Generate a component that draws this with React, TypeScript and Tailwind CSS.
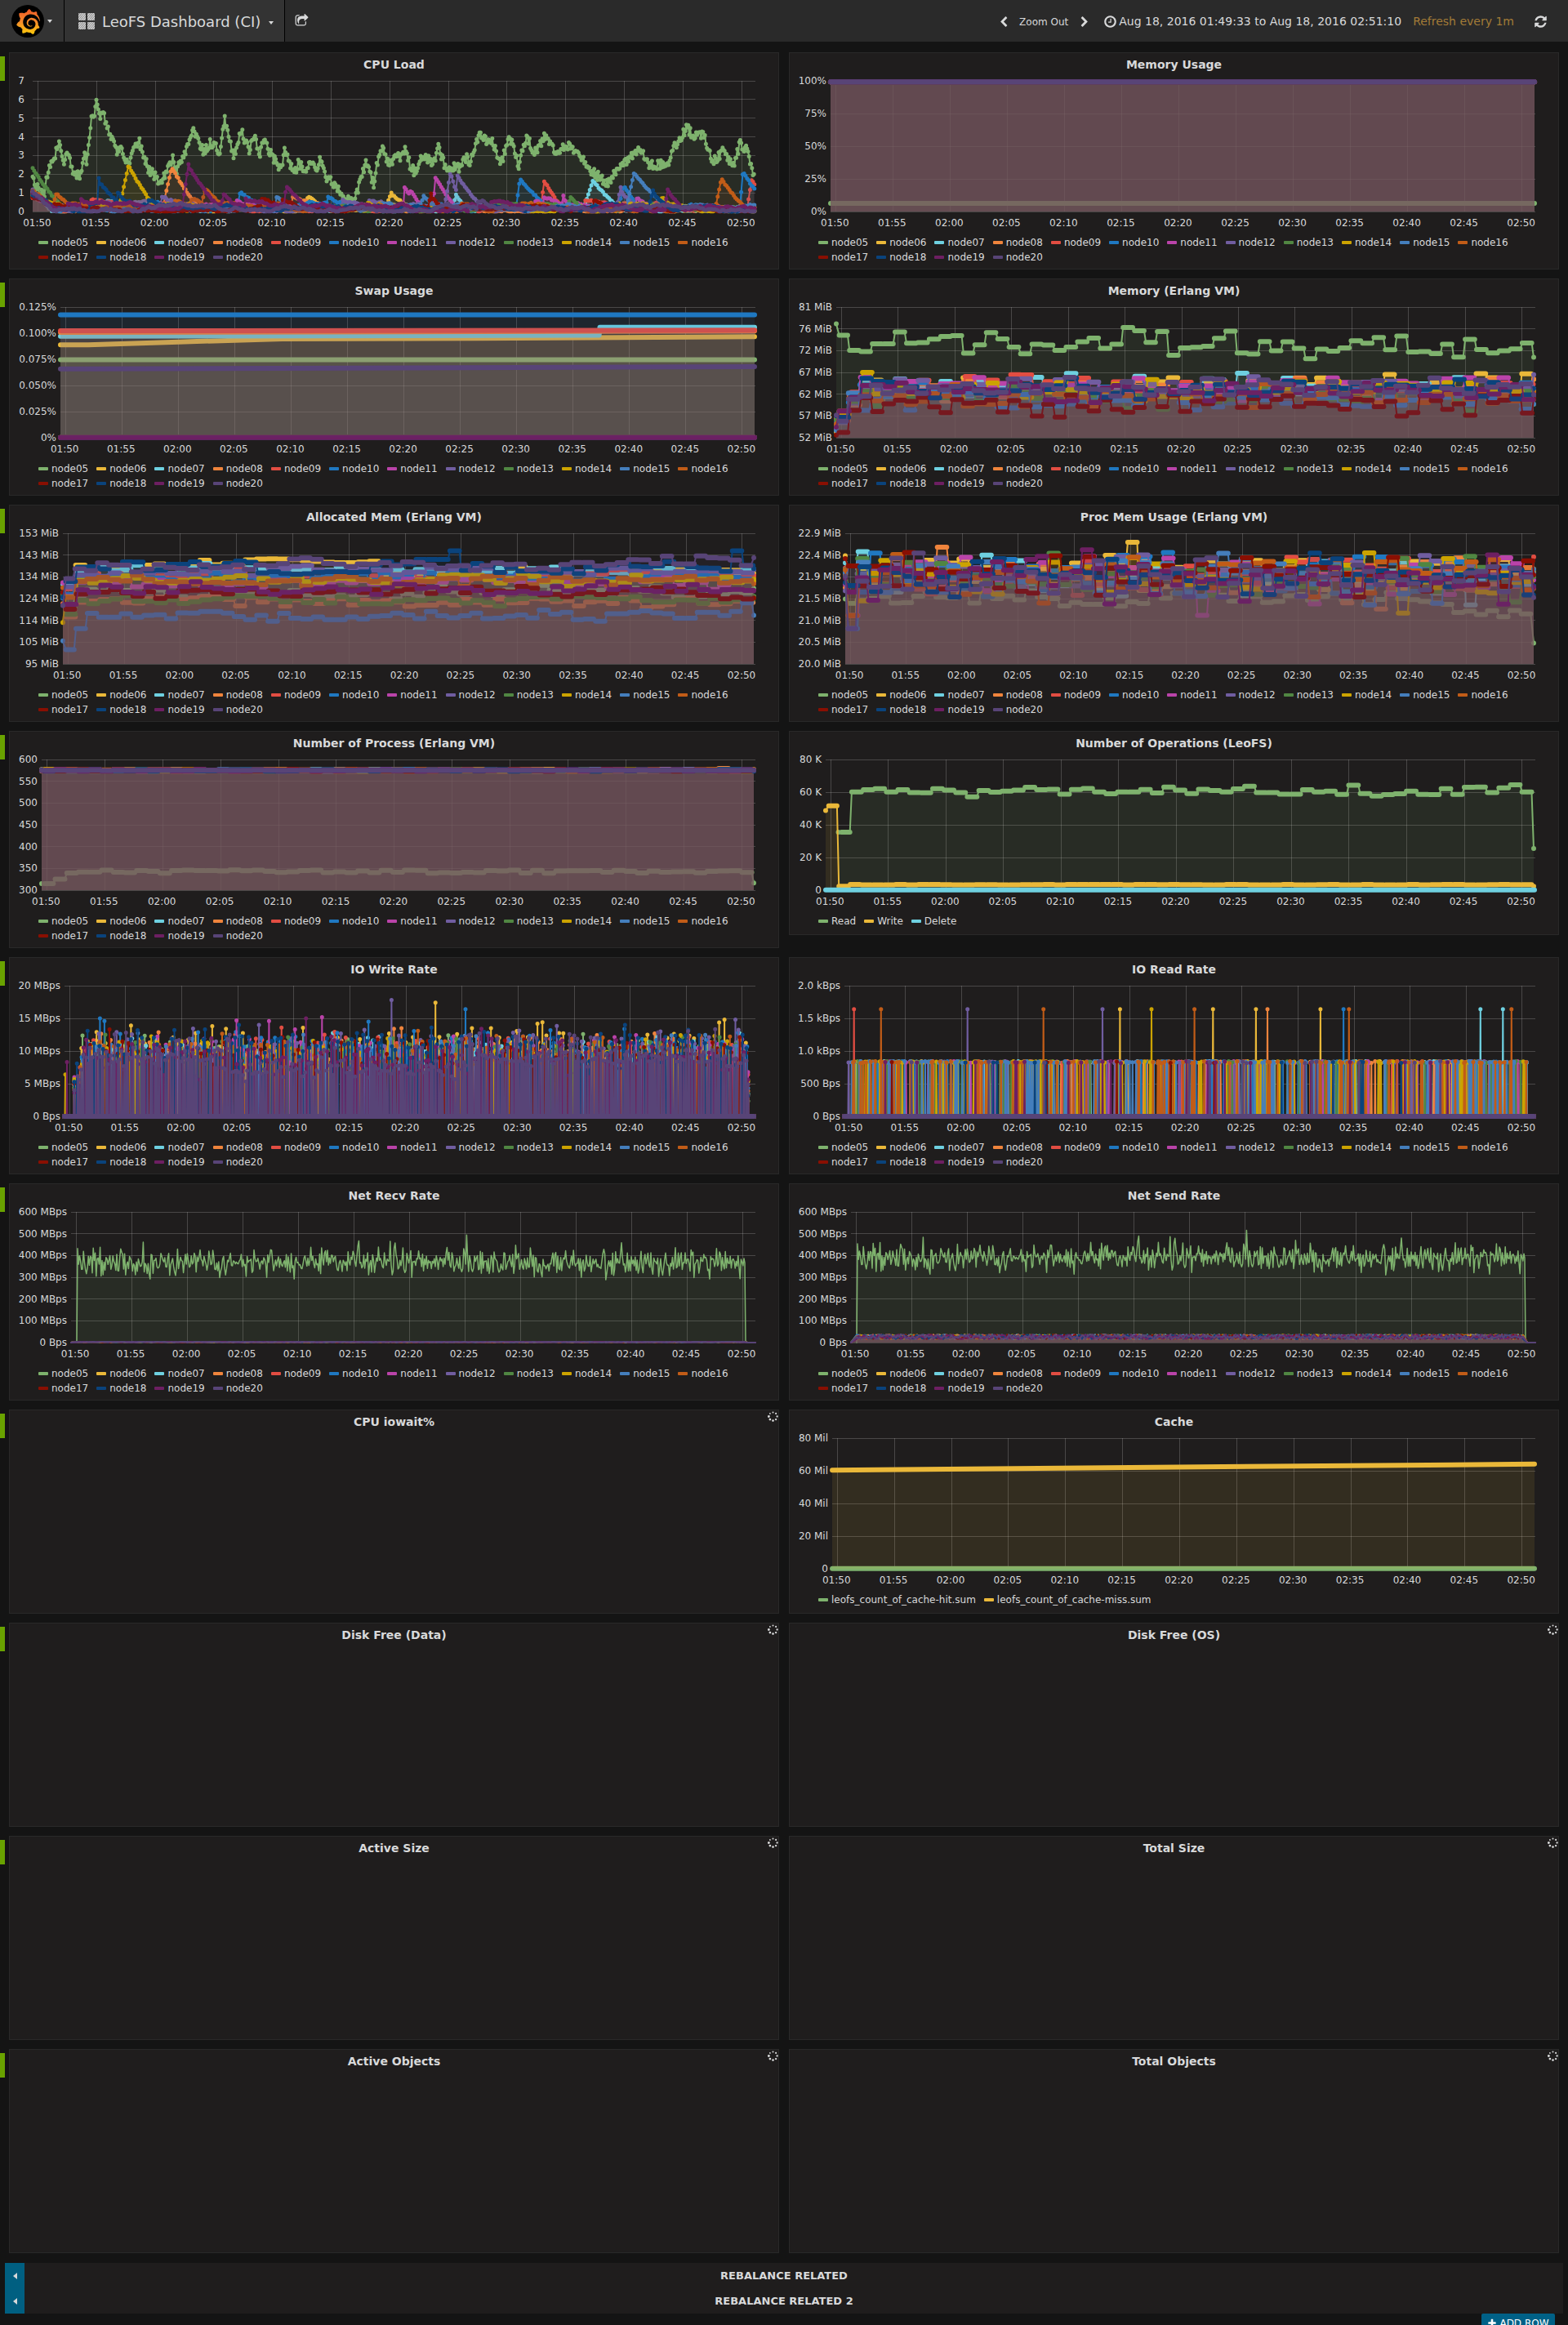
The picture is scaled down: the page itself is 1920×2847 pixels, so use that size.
import React from 'react';
import { SiGrafana } from 'react-icons/si';

const PALETTE = [
  '#7EB26D', '#EAB839', '#6ED0E0', '#EF843C', '#E24D42', '#1F78C1', '#BA43A9', '#705DA0',
  '#508642', '#CCA300', '#447EBC', '#C15C17', '#890F02', '#0A437C', '#6D1F62', '#584477',
];
const NODES = PALETTE.map((color, i) => ({ color, label: `node${String(i + 5).padStart(2, '0')}` }));

const TIMES = ['01:50', '01:55', '02:00', '02:05', '02:10', '02:15', '02:20', '02:25', '02:30', '02:35', '02:40', '02:45', '02:50'];
const SPAN = 61.617;
const FIRST_TICK = 0.45;
const RIGHT = 913;
const TOP = 6;
const HEIGHT = 160;
const BOTTOM = TOP + HEIGHT;

type Pt = [number, number];
type Layer = {
  color: string;
  fill?: Pt[];
  line?: Pt[];
  thin?: number;
  thick?: Pt[][];
  dots?: Pt[];
};

function rng(seed: number) {
  let s = seed * 2654435761 + 12345;
  return () => {
    s = (s + 0x6d2b79f5) | 0;
    let t = Math.imul(s ^ (s >>> 15), 1 | s);
    t = (t + Math.imul(t ^ (t >>> 7), 61 | t)) ^ t;
    return ((t ^ (t >>> 14)) >>> 0) / 4294967296;
  };
}

const f = (n: number) => Math.round(n * 10) / 10;
const yOf = (frac: number) => BOTTOM - frac * HEIGHT;
const poly = (pts: Pt[]) => pts.map(([x, y], i) => `${i ? 'L' : 'M'}${f(x)} ${f(y)}`).join('');
const area = (pts: Pt[]) => (pts.length ? `${poly(pts)}L${f(pts[pts.length - 1][0])} ${BOTTOM}L${f(pts[0][0])} ${BOTTOM}Z` : '');
const dotPath = (pts: Pt[]) => pts.map(([x, y]) => `M${f(x)} ${f(y)}h0.01`).join('');

function interp(keys: Pt[], x: number) {
  if (x <= keys[0][0]) return keys[0][1];
  for (let i = 1; i < keys.length; i++) {
    if (x <= keys[i][0]) {
      const [x0, y0] = keys[i - 1];
      const [x1, y1] = keys[i];
      return y0 + ((y1 - y0) * (x - x0)) / (x1 - x0);
    }
  }
  return keys[keys.length - 1][1];
}

/* A near-constant series whose points merge into one thick band. */
function band(color: string, left: number, keys: Pt[]): Layer {
  const pts: Pt[] = keys.map(([t, v]) => [left + t * (RIGHT - left - 1), yOf(v)]);
  return { color, fill: pts, thick: [pts] };
}

/* A series that holds each value for about a minute. */
function steps(color: string, left: number, vals: number[], phase = 0, startAt = 0): Layer {
  const n = vals.length - 2;
  const scale = (RIGHT - left) / SPAN;
  const unit = (61.3 - startAt) / n;
  const thick: Pt[][] = [];
  const line: Pt[] = [];
  const x0 = left + startAt * scale;
  line.push([x0, yOf(vals[0])]);
  thick.push([[x0, yOf(vals[0])], [x0 + 0.01, yOf(vals[0])]]);
  for (let i = 0; i < n; i++) {
    const a = left + (startAt + i * unit + (i ? phase : 0.1) + 0.16) * scale;
    const b = left + (startAt + (i + 1) * unit + phase) * scale;
    const y = yOf(vals[i + 1]);
    thick.push([[a, y], [b, y]]);
    line.push([a, y], [b, y]);
  }
  const end: Pt = [RIGHT - 2, yOf(vals[vals.length - 1])];
  line.push(end);
  thick.push([end, [end[0] + 0.01, end[1]]]);
  return { color, fill: line, line, thin: 2, thick };
}

/* ---------- CPU load ---------- */
const CPU_MAIN: Pt[] = [
  [40, 1.9], [49, 1], [54, 0.9], [56, 1.4], [59, 2.2], [67, 3], [73, 3.9], [78, 2.7], [83, 3.1], [89, 2.2], [98, 1.9], [103, 3.1], [106, 2.6],
  [112, 5.2], [114, 4.9], [118, 6], [122, 4.9], [125, 5.5], [131, 4.5], [138, 3.8], [145, 3.1], [149, 3.4], [157, 2.5], [163, 3.3],
  [171, 3.7], [176, 3], [182, 2.2], [188, 2], [196, 1.4], [204, 2.2], [211, 2.9], [216, 2.2], [224, 2.8], [231, 3.8], [236, 4.3], [241, 3.9],
  [250, 3.2], [257, 3.7], [263, 3.6], [268, 3], [275, 5], [280, 4], [286, 3.1], [291, 3.5], [295, 4.4], [300, 3.7], [306, 3.3], [311, 4.1],
  [318, 3], [324, 4], [331, 3.1], [345, 2.2], [349, 3.4], [355, 2.5], [362, 2.1], [366, 2.7], [373, 2], [381, 2.8], [388, 2], [392, 3],
  [400, 1.8], [408, 1.5], [424, 0.5], [437, 0.9], [441, 1.8], [448, 2.6], [458, 1.4], [463, 2.9], [468, 3.3], [480, 2.4], [486, 3.2],
  [490, 2.7], [496, 3.4], [502, 2.5], [508, 2.1], [518, 3], [531, 2.6], [537, 3.4], [545, 2.4], [565, 2.3], [567, 3], [575, 2.7], [587, 4.1],
  [596, 3.8], [602, 3.8], [613, 2.5], [624, 4], [635, 2.5], [645, 4.1], [654, 3.1], [667, 4], [681, 3.1], [696, 3.6], [708, 3.1], [726, 2.1],
  [745, 1.5], [754, 2.2], [772, 2.9], [781, 3.4], [796, 2.5], [817, 2.5], [826, 3.5], [841, 4.5], [850, 4], [861, 4.2], [872, 2.6],
  [886, 3.3], [899, 2.4], [906, 3.7], [914, 3.3], [924, 1.8],
];
// [series, peak x, peak value, rise width, decay width]
const CPU_BUMPS: number[][] = [
  [8, 40, 2.3, 1, 30], [13, 121, 1.6, 1, 26], [13, 145, 1, 3, 14], [9, 158, 2.4, 12, 26], [3, 211, 2.3, 12, 26], [14, 231, 2.4, 8, 30],
  [11, 70, 0.9, 6, 20], [11, 252, 1.2, 6, 22], [5, 295, 1, 5, 26], [14, 275, 0.9, 5, 16], [14, 350, 1.4, 1, 24], [1, 378, 0.8, 4, 20],
  [10, 340, 0.8, 4, 14], [1, 480, 0.9, 8, 22], [6, 495, 1.3, 1, 18], [6, 503, 1.1, 2, 14], [6, 532, 1.9, 1, 22], [7, 552, 2, 8, 12],
  [7, 560, 1.9, 3, 26], [12, 528, 0.8, 4, 14], [10, 520, 0.8, 6, 14], [2, 559, 0.8, 5, 14], [5, 637, 1.7, 5, 30], [4, 667, 1.6, 5, 18],
  [2, 727, 1.6, 12, 26], [10, 777, 2, 10, 34], [5, 765, 1.3, 8, 16], [14, 817, 1.2, 2, 16], [11, 884, 1.7, 8, 24], [9, 812, 0.7, 6, 16],
  [5, 910, 2.1, 4, 26], [4, 921, 1.7, 6, 20], [13, 800, 1, 6, 18], [8, 700, 0.7, 6, 14], [6, 690, 0.7, 3, 14], [7, 760, 1.1, 5, 18],
];
function cpuLayers(left: number): Layer[] {
  return PALETTE.map((color, s) => {
    const r = rng(s + 11);
    const pts: Pt[] = [];
    let n = 0.3;
    for (let x = left; x <= RIGHT - 1; x += s === 0 ? 1.2 : 1.8) {
      let v: number;
      if (s === 0) {
        v = Math.max(0.2, interp(CPU_MAIN, x + 12) + (r() - 0.5) * 0.5);
      } else {
        n += (r() - 0.5) * 0.14 - (n - 0.15) * 0.06;
        if (r() < 0.006) n += 0.35;
        n = Math.max(0.01, n);
        v = n + Math.max(0, 0.8 - (x - left) / 30) * (0.6 + (s % 4) * 0.15);
        for (const [bs, px, pv, up, down] of CPU_BUMPS) {
          if (bs !== s) continue;
          const d = x + 12 - px;
          if (d < 0 && d > -up) v = Math.max(v, pv * (1 + d / up) + 0.2);
          if (d >= 0 && d < down * 1.5) v = Math.max(v, pv * Math.pow(1 - d / (down * 1.5), 1.3) + (r() - 0.5) * 0.08);
        }
      }
      pts.push([x, yOf(v / 7)]);
    }
    return { color, fill: pts, line: pts, thin: 2, dots: pts };
  });
}

/* ---------- Step charts ---------- */
const fromPx = (px: number[], top: number, bottom: number) => px.map((p) => (bottom - p) / (bottom - top));
const ERL_MAIN = fromPx(
  [170, 212, 267, 272, 243, 243, 200, 241, 239, 226, 216, 213, 278, 247, 202, 225, 255, 280, 245, 248, 267, 255, 236, 222, 260, 245, 183, 195, 238, 198, 285,
    258, 256, 252, 223, 197, 277, 281, 235, 269, 236, 260, 298, 263, 270, 258, 232, 241, 220, 265, 215, 273, 272, 279, 245, 292, 227, 264, 277, 269, 262, 240, 293],
  108, 589,
);
const ALLOC_LOW = fromPx(
  [510, 542, 465, 409, 423, 423, 410, 423, 416, 414, 428, 407, 408, 402, 402, 408, 421, 432, 416, 438, 409, 427, 430, 422, 432, 432, 422, 430, 420, 418,
    408, 415, 428, 402, 418, 425, 418, 408, 428, 427, 419, 415, 426, 397, 412, 405, 432, 430, 438, 410, 410, 405, 400, 407, 410, 427, 427, 405, 405, 417, 402, 370, 416],
  114, 595,
);
const READ_OPS = fromPx(
  [387, 387, 240, 232, 228, 240, 232, 242, 243, 228, 233, 242, 258, 235, 241, 237, 233, 223, 232, 230, 248, 231, 227, 240, 247, 240, 240, 231, 244, 222, 233,
    246, 230, 235, 240, 229, 219, 242, 242, 248, 248, 232, 240, 237, 249, 215, 246, 255, 250, 247, 237, 249, 250, 228, 249, 223, 222, 242, 225, 214, 240, 447],
  121, 600,
);
const N = 63;

function erlangLayers(left: number): Layer[] {
  const base = [0, 0.4, 0.4, 0.38, 0.38, 0.36, 0.38, 0.38, 0.31, 0.35, 0.3, 0.33, 0.26, 0.37, 0.35, 0.385];
  return PALETTE.map((color, s) => {
    if (s === 0) return steps(color, left, ERL_MAIN);
    const r = rng(s + 40);
    const vals = Array.from({ length: N }, (_, i) => {
      if (i === 0) return s === 12 ? 0.02 : 0.04 + r() * 0.14;
      if (i === 1) return s === 12 ? 0.04 : 0.1 + r() * 0.12;
      if (i === 2) return s === 12 ? 0.21 : 0.24 + r() * 0.12;
      return base[s] + (r() + r() - 1) * (s > 12 ? 0.09 : 0.11);
    });
    if (s === 9) vals[3] = 0.5;
    if (s === 13) vals[3] = 0.455;
    return steps(color, left, vals, (s % 5) * 0.06 - 0.1);
  });
}

function allocLayers(left: number): Layer[] {
  const base = [0.55, 0.75, 0.72, 0.47, 0.68, 0.66, 0.62, 0.71, 0.49, 0.64, 0, 0.64, 0.55, 0.745, 0.57, 0.755];
  return PALETTE.map((color, s) => {
    if (s === 10) return steps(color, left, ALLOC_LOW);
    const r = rng(s + 70);
    let drift = 0;
    const vals = Array.from({ length: N }, (_, i) => {
      drift = drift * 0.6 + (r() - 0.5) * 0.05;
      if (i === 0) return 0.28 + r() * 0.35;
      if (i === 1) return base[s] - 0.14 + r() * 0.04;
      if (i === 2) return base[s] - 0.03 + r() * 0.04;
      let v = base[s] + drift + (r() - 0.5) * 0.05;
      if (s === 1 && i > 16 && i < 29) v = 0.79 + 0.015 * Math.sin((i - 16) / 2);
      if (s === 1 && i >= 29) v = 0.7 + drift;
      if (s === 13 && (i === 35 || i === 60)) v = 0.865;
      if (s === 13 && i > 31 && i < 35) v = 0.8;
      if (s === 13 && i > 17 && i < 28) v = 0.7 + drift * 0.5;
      if (s === 15 && i > 53) v += 0.045;
      return v;
    });
    return steps(color, left, vals, (s % 5) * 0.07 - 0.1);
  });
}

function procMemLayers(left: number): Layer[] {
  return PALETTE.map((color, s) => {
    const r = rng(s + 101);
    const vals = Array.from({ length: N }, (_, i) => {
      if (s === 0) {
        if (i === N - 1) return 0.16;
        if (i > 54) return 0.36 + r() * 0.06;
        return 0.44 + r() * 0.12;
      }
      if (i === 1) return [0.27, 0.37, 0.75, 0.6, 0.55][s % 5];
      const v = 0.68 + (r() + r() - 1) * 0.18;
      return v + (r() < 0.05 ? 0.08 : 0) - (r() < 0.06 ? 0.14 : 0);
    });
    return steps(color, left, vals, (s % 7) * 0.04 - 0.1);
  });
}

function processLayers(left: number): Layer[] {
  return PALETTE.map((color, s) => {
    const r = rng(s + 130);
    if (s === 0) {
      const vals = Array.from({ length: N }, (_, i) => (i < 2 ? 0.05 : i === 2 ? 0.085 : i === N - 1 ? 0.055 : 0.142 + (r() - 0.5) * 0.025));
      return steps(color, left, vals);
    }
    const vals = Array.from({ length: N }, () => 0.917 + (r() - 0.5) * (s === 15 ? 0.001 : 0.014));
    if (s === 3) vals[59] = 0.932;
    return steps(color, left, vals);
  });
}

function opsLayers(left: number): Layer[] {
  const r = rng(170);
  const write = Array.from({ length: N - 2 }, () => 0.042 + (r() - 0.5) * 0.004);
  return [
    steps(PALETTE[0], left, READ_OPS, 0, 1.1),
    steps(PALETTE[1], left, [0.61, 0.645, 0.03, ...write.slice(1), 0.03]),
    band(PALETTE[2], left, [[0, 0.001], [1, 0.001]]),
  ];
}

/* ---------- Spike charts ---------- */
function spikes(color: string, list: Pt[], left: number): Layer {
  const line: Pt[] = [[left, BOTTOM]];
  const sorted = [...list].sort((a, b) => a[0] - b[0]);
  sorted.forEach(([x, y]) => line.push([x - 0.5, BOTTOM], [x, y], [x + 0.5, BOTTOM]));
  line.push([RIGHT - 2, BOTTOM]);
  return { color, line, thin: 2, dots: sorted, thick: [[[left, BOTTOM], [RIGHT - 2, BOTTOM]]] };
}
const WRITE_TALL: number[][] = [
  [5, 200, 15], [5, 209, 14.6], [1, 262, 13.9], [6, 473, 14.7], [13, 478, 14], [7, 518, 14], [6, 538, 14.6], [4, 563, 13.6], [14, 612, 15],
  [6, 644, 15.2], [5, 737, 14.5], [7, 783, 17.8], [1, 871, 17.4], [5, 931, 16.4], [1, 944, 13.5], [1, 982, 13.5], [13, 863, 13.6],
  [14, 963, 13.4], [1, 1075, 14.2], [1, 1085, 14.4], [13, 1250, 14], [1, 1449, 14.8], [7, 1471, 14.8], [3, 788, 13.4], [3, 803, 13.5],
  [12, 219, 13.3], [1, 452, 13.4], [13, 410, 13.3], [6, 590, 13.3], [1, 193, 12.9], [11, 836, 13.1], [7, 1321, 13], [5, 1101, 13.2],
];
function ioWriteLayers(left: number): Layer[] {
  return PALETTE.map((color, s) => {
    const r = rng(s + 200);
    const list: Pt[] = [];
    const gap = s === 15 ? 2.8 : s > 12 ? 6 : 9;
    for (let x = left + 12; x < RIGHT - 10; x += gap * (0.5 + r())) {
      const mid = x > 270 && x < 560;
      let v = 10 + (r() + r() - 1) * 3;
      if (s === 15) v = (mid ? 7.2 : 9) + (r() + r() - 1) * 2;
      if (s === 15 && r() < 0.12) v += 3;
      if (s === 14) v = 9 + (r() + r() - 1) * 3.5;
      if (s === 13 || s === 5 || s === 7 || s === 1) v += r() * 1.6;
      if (x < left + 22) v *= (x - left) / 24;
      list.push([x, yOf(v / 20)]);
    }
    if (s === 9) list.push([left + 1, yOf(6.4 / 20)]);
    if (s === 14) list.push([left + 3, yOf(8.3 / 20)]);
    list.push([RIGHT - 9, yOf((2 + r() * 5) / 20)]);
    WRITE_TALL.filter((t) => t[0] === s).forEach(([, px, v]) => list.push([px * 0.6122 - 12, yOf(v / 20)]));
    return spikes(color, list, left);
  });
}
const READ_TALL: number[][] = [
  [4, 140], [11, 194], [7, 367], [11, 519], [7, 637], [1, 672], [9, 735], [11, 821], [1, 858], [1, 944], [3, 967], [1, 1073], [5, 1119],
  [11, 1130], [2, 1393], [2, 1438], [11, 1455],
];
function ioReadLayers(left: number): Layer[] {
  const counts = [20, 50, 50, 60, 50, 70, 60, 60, 70, 130, 130, 105, 6, 10, 22, 14];
  return PALETTE.map((color, s) => {
    const r = rng(s + 260);
    const list: Pt[] = [];
    for (let i = 0; i < counts[s]; i++) list.push([left + 6 + r() * (RIGHT - left - 16), yOf((815 + r() * 30) / 2000)]);
    if (s === 7) list.push([left + 5, yOf(825 / 2000)]);
    READ_TALL.filter((t) => t[0] === s).forEach(([, px]) => list.push([px * 0.6122 - 7, yOf(1640 / 2000)]));
    return spikes(color, list, left);
  });
}

/* ---------- Network ---------- */
function netLayers(left: number, mean: number, others: number): Layer[] {
  return PALETTE.map((color, s) => {
    const r = rng(s + 300);
    const pts: Pt[] = [];
    const a = left + 7;
    const b = RIGHT - 13;
    if (s === 0) {
      pts.push([a, BOTTOM]);
      for (let x = a + 1; x < b; x += 1.2) {
        let v = mean + (r() + r() + r() - 1.5) * 58;
        if (r() < 0.04) v += 45;
        if (r() < 0.03) v -= 40;
        if (Math.abs(x - (left + 484)) < 0.7) v = mean + 128;
        pts.push([x, yOf(v / 600)]);
      }
      pts.push([b, yOf(mean / 600)], [b + 1, BOTTOM - 2], [b + 4, BOTTOM]);
    } else {
      pts.push([left, BOTTOM]);
      for (let x = a; x < b; x += 2) pts.push([x, yOf((others * (0.6 + r() * 0.8)) / 600)]);
      pts.push([b + 3, BOTTOM], [RIGHT, BOTTOM]);
    }
    return { color, fill: pts, line: pts, thin: s ? 2 : 1.5 };
  });
}

/* ---------- Bands ---------- */
function memoryLayers(left: number): Layer[] {
  return PALETTE.map((color, s) => band(color, left, s ? [[0, 0.992], [1, 0.992]] : [[0, 0.063], [1, 0.063]]));
}
function swapLayers(left: number): Layer[] {
  const keys: Record<number, Pt[]> = {
    0: [[0, 0.597], [1, 0.597]],
    1: [[0, 0.711], [0.04, 0.711], [0.17, 0.733], [0.32, 0.756], [0.6, 0.761], [1, 0.773]],
    2: [[0, 0.776], [0.776, 0.784], [0.777, 0.845], [1, 0.845]],
    3: [[0, 0.806], [1, 0.817]],
    4: [[0, 0.818], [1, 0.823]],
    5: [[0, 0.94], [1, 0.94]],
    15: [[0, 0.526], [1, 0.543]],
  };
  return PALETTE.map((color, s) => band(color, left, keys[s] ?? [[0, 0.002], [1, 0.002]]));
}
function cacheLayers(left: number): Layer[] {
  return [band(PALETTE[0], left, [[0, 0.001], [1, 0.001]]), band(PALETTE[1], left, [[0, 0.755], [1, 0.801]])];
}

/* ---------- Chart ---------- */
type ChartSpec = { left: number; labelGap?: number; ticks: string[]; layers: (left: number) => Layer[] };

function Chart({ spec, title }: { spec: ChartSpec; title: string }) {
  const { left, ticks, labelGap = 5 } = spec;
  const layers = React.useMemo(() => spec.layers(left), [spec, left]);
  return (
    <svg viewBox="0 0 941 188" className="block h-auto w-full" role="img" aria-label={title}>
      <g stroke="#c8c8c8" strokeOpacity="0.25" shapeRendering="crispEdges">
        {ticks.map((t, i) => {
          const y = TOP + (i * HEIGHT) / (ticks.length - 1);
          return <line key={t} x1={left} x2={RIGHT} y1={y} y2={y} />;
        })}
        {TIMES.map((t, i) => {
          const x = left + ((FIRST_TICK + i * 5) * (RIGHT - left)) / SPAN;
          return <line key={t} x1={x} x2={x} y1={TOP} y2={BOTTOM} />;
        })}
      </g>
      {layers.map((l, i) => (
        <g key={i} fill="none" stroke={l.color} strokeLinejoin="round" strokeLinecap="round">
          {l.fill && <path d={area(l.fill)} fill={l.color} fillOpacity="0.1" stroke="none" />}
          {l.line && <path d={poly(l.line)} strokeWidth={l.thin} />}
          {l.thick && <path d={l.thick.map(poly).join('')} strokeWidth="6" />}
          {l.dots && <path d={dotPath(l.dots)} strokeWidth="5" />}
        </g>
      ))}
      <g className="fill-[#d8d9da] text-[12px]">
        {ticks.map((t, i) => (
          <text key={t} x={left - labelGap} y={TOP + (i * HEIGHT) / (ticks.length - 1) + 4} textAnchor="end">{t}</text>
        ))}
        {TIMES.map((t, i) => (
          <text key={t} x={left - 1 + ((FIRST_TICK + i * 5) * (RIGHT - left)) / SPAN} y="184" textAnchor="middle">{t}</text>
        ))}
      </g>
    </svg>
  );
}

function Legend({ items }: { items: { color: string; label: string }[] }) {
  return (
    <ul className="mt-[7px] flex flex-wrap pr-2 pb-[5px] pl-[35px]">
      {items.map((it) => (
        <li key={it.label} className="mr-[10px]">
          <button type="button" className="flex items-center gap-1 text-[12px] leading-[18px]">
            <svg width="12" height="4" aria-hidden="true"><rect width="12" height="4" rx="1" fill={it.color} /></svg>
            {it.label}
          </button>
        </li>
      ))}
    </ul>
  );
}

function Spinner() {
  return (
    <svg viewBox="0 0 14 14" className="absolute top-px right-0 size-[13px]" aria-label="Loading">
      {Array.from({ length: 8 }, (_, i) => {
        const a = (i * Math.PI) / 4;
        return <circle key={i} cx={7 + 5.5 * Math.cos(a)} cy={7 + 5.5 * Math.sin(a)} r={1 + ((i + 3) % 8) * 0.08} fill="#d8d9da" />;
      })}
    </svg>
  );
}

type PanelSpec = { title: string; chart?: ChartSpec; legend?: { color: string; label: string }[] };

function Panel({ title, chart, legend = NODES }: PanelSpec) {
  return (
    <section className="relative min-h-[250px] min-w-0 flex-1 self-start border border-[#292929] bg-[#1f1d1d]">
      <h2 className="h-7 text-center text-[14px] leading-7 font-bold">{title}</h2>
      {chart ? (
        <>
          <Chart spec={chart} title={title} />
          <Legend items={legend} />
        </>
      ) : (
        <Spinner />
      )}
    </section>
  );
}

const NET_TICKS = ['600 MBps', '500 MBps', '400 MBps', '300 MBps', '200 MBps', '100 MBps', '0 Bps'];
const named = (labels: string[]) => labels.map((label, i) => ({ label, color: PALETTE[i] }));

const ROWS: PanelSpec[][] = [
  [
    { title: 'CPU Load', chart: { left: 28, labelGap: 10, ticks: ['7', '6', '5', '4', '3', '2', '1', '0'], layers: cpuLayers } },
    { title: 'Memory Usage', chart: { left: 50, ticks: ['100%', '75%', '50%', '25%', '0%'], layers: memoryLayers } },
  ],
  [
    { title: 'Swap Usage', chart: { left: 62, ticks: ['0.125%', '0.100%', '0.075%', '0.050%', '0.025%', '0%'], layers: swapLayers } },
    { title: 'Memory (Erlang VM)', chart: { left: 57, ticks: ['81 MiB', '76 MiB', '72 MiB', '67 MiB', '62 MiB', '57 MiB', '52 MiB'], layers: erlangLayers } },
  ],
  [
    { title: 'Allocated Mem (Erlang VM)', chart: { left: 65, ticks: ['153 MiB', '143 MiB', '134 MiB', '124 MiB', '114 MiB', '105 MiB', '95 MiB'], layers: allocLayers } },
    { title: 'Proc Mem Usage (Erlang VM)', chart: { left: 68, ticks: ['22.9 MiB', '22.4 MiB', '21.9 MiB', '21.5 MiB', '21.0 MiB', '20.5 MiB', '20.0 MiB'], layers: procMemLayers } },
  ],
  [
    { title: 'Number of Process (Erlang VM)', chart: { left: 39, ticks: ['600', '550', '500', '450', '400', '350', '300'], layers: processLayers } },
    { title: 'Number of Operations (LeoFS)', chart: { left: 44, ticks: ['80 K', '60 K', '40 K', '20 K', '0'], layers: opsLayers }, legend: named(['Read', 'Write', 'Delete']) },
  ],
  [
    { title: 'IO Write Rate', chart: { left: 67, ticks: ['20 MBps', '15 MBps', '10 MBps', '5 MBps', '0 Bps'], layers: ioWriteLayers } },
    { title: 'IO Read Rate', chart: { left: 67, ticks: ['2.0 kBps', '1.5 kBps', '1.0 kBps', '500 Bps', '0 Bps'], layers: ioReadLayers } },
  ],
  [
    { title: 'Net Recv Rate', chart: { left: 75, ticks: NET_TICKS, layers: (l) => netLayers(l, 366, 3) } },
    { title: 'Net Send Rate', chart: { left: 75, ticks: NET_TICKS, layers: (l) => netLayers(l, 388, 26) } },
  ],
  [
    { title: 'CPU iowait%' },
    { title: 'Cache', chart: { left: 52, ticks: ['80 Mil', '60 Mil', '40 Mil', '20 Mil', '0'], layers: cacheLayers }, legend: named(['leofs_count_of_cache-hit.sum', 'leofs_count_of_cache-miss.sum']) },
  ],
  [{ title: 'Disk Free (Data)' }, { title: 'Disk Free (OS)' }],
  [{ title: 'Active Size' }, { title: 'Total Size' }],
  [{ title: 'Active Objects' }, { title: 'Total Objects' }],
];

/* ---------- Navigation ---------- */
const ICONS = {
  share: 'M1472 989v259q0 119-84.5 203.5t-203.5 84.5h-832q-119 0-203.5-84.5t-84.5-203.5v-832q0-119 84.5-203.5t203.5-84.5h255q13 0 22.5 9.5t9.5 22.5q0 27-26 32-77 26-133 60-10 4-16 4h-112q-66 0-113 47t-47 113v832q0 66 47 113t113 47h832q66 0 113-47t47-113v-214q0-19 18-29 28-13 54-37 16-16 35-8 21 9 21 29zm237-496l-384 384q-18 19-45 19-12 0-25-5-39-17-39-59v-192h-160q-323 0-438 131-119 137-74 473 3 23-20 34-8 2-12 2-16 0-26-13-10-14-21-31t-39.5-68.5-49.5-99.5-38.5-114-17.5-122q0-49 3.5-91t14-90 28-88 47-81.5 68.5-74 94.5-61.5 124.5-48.5 159.5-30.5 196.5-11h160v-192q0-42 39-59 13-5 25-5 26 0 45 19l384 384q19 19 19 45t-19 45z',
  clock: 'M1024 544v448q0 14-9 23t-23 9h-320q-14 0-23-9t-9-23v-64q0-14 9-23t23-9h224v-352q0-14 9-23t23-9h64q14 0 23 9t9 23zm416 352q0-148-73-273t-198-198-273-73-273 73-198 198-73 273 73 273 198 198 273 73 273-73 198-198 73-273zm224 0q0 209-103 385.5t-279.5 279.5-385.5 103-385.5-103-279.5-279.5-103-385.5 103-385.5 279.5-279.5 385.5-103 385.5 103 279.5 279.5 103 385.5z',
  refresh: 'M1639 1056q0 5-1 7-64 268-268 434.5t-478 166.5q-146 0-282.5-55t-243.5-157l-129 129q-19 19-45 19t-45-19-19-45v-448q0-26 19-45t45-19h448q26 0 45 19t19 45-19 45l-137 137q71 66 161 102t187 36q134 0 250-65t186-179q11-17 53-117 8-23 30-23h192q13 0 22.5 9.5t9.5 22.5zm25-800v448q0 26-19 45t-45 19h-448q-26 0-45-19t-19-45 19-45l138-138q-148-137-349-137-134 0-250 65t-186 179q-11 17-53 117-8 23-30 23h-199q-13 0-22.5-9.5t-9.5-22.5v-7q65-268 270-434.5t480-166.5q146 0 284 55.5t245 156.5l130-129q19-19 45-19t45 19 19 45z',
  left: 'M1427 301l-531 531 531 531q19 19 19 45t-19 45l-166 166q-19 19-45 19t-45-19l-742-742q-19-19-19-45t19-45l742-742q19-19 45-19t45 19l166 166q19 19 19 45t-19 45z',
  right: 'M1363 877l-742 742q-19 19-45 19t-45-19l-166-166q-19-19-19-45t19-45l531-531-531-531q-19-19-19-45t19-45l166-166q19-19 45-19t45 19l742 742q19 19 19 45t-19 45z',
  plus: 'M1600 736v192q0 40-28 68t-68 28h-416v416q0 40-28 68t-68 28h-192q-40 0-68-28t-28-68v-416h-416q-40 0-68-28t-28-68v-192q0-40 28-68t68-28h416v-416q0-40 28-68t68-28h192q40 0 68 28t28 68v416h416q40 0 68 28t28 68z',
};
function Icon({ name, size }: { name: keyof typeof ICONS; size: number }) {
  return (
    <svg width={size} height={size} viewBox="0 0 1792 1792" fill="currentColor" aria-hidden="true" className="shrink-0">
      <path d={ICONS[name]} />
    </svg>
  );
}
function Caret() {
  return <svg width="6" height="4" viewBox="0 0 6 4" aria-hidden="true"><path d="M0 0h6L3 4z" fill="#d8d9da" /></svg>;
}

function NavBar() {
  return (
    <header className="flex h-[51px] items-stretch bg-[#2a2a2a]">
      <button type="button" aria-label="Main menu" className="flex w-[79px] items-center gap-1 border-r border-black bg-[#333333] pt-px pl-[14px]">
        <span className="flex size-10 items-center justify-center rounded-full bg-black">
          <svg width="0" height="0" className="absolute" aria-hidden="true">
            <defs>
              <linearGradient id="logo" x1="0" y1="0" x2="0" y2="1">
                <stop offset="0" stopColor="#f05a28" />
                <stop offset="0.5" stopColor="#f58a2a" />
                <stop offset="1" stopColor="#fbca0a" />
              </linearGradient>
            </defs>
          </svg>
          <SiGrafana size={31} fill="url(#logo)" />
        </span>
        <Caret />
      </button>
      <button type="button" className="flex w-[270px] items-center border-r border-black bg-[#333333] pt-px pl-[17px] text-[18px]">
        <svg width="20" height="20" viewBox="0 0 20 20" aria-hidden="true" className="mr-[9px]">
          <defs>
            <pattern id="hatch" width="2" height="2" patternUnits="userSpaceOnUse" patternTransform="rotate(40)">
              <rect width="2" height="2" fill="#8a8a8a" />
              <rect width="1" height="2" fill="#e0e0e0" />
            </pattern>
          </defs>
          <g fill="url(#hatch)">
            <rect width="9" height="9" rx="1" />
            <rect x="11" width="9" height="9" rx="1" />
            <rect y="11" width="9" height="9" rx="1" />
            <rect x="11" y="11" width="9" height="9" rx="1" />
          </g>
        </svg>
        <span className="mr-[10px] whitespace-nowrap">LeoFS Dashboard (CI)</span>
        <span className="pt-1"><Caret /></span>
      </button>
      <button type="button" aria-label="Share dashboard" className="pl-[12px]"><Icon name="share" size={17} /></button>
      <div className="ml-auto flex items-center pt-[2px] pr-[25px] text-[14px]">
        <button type="button" aria-label="Earlier" className="mr-[12px]"><Icon name="left" size={14} /></button>
        <button type="button" className="mr-[13px] text-[12px]">Zoom Out</button>
        <button type="button" aria-label="Later" className="mr-[16px]"><Icon name="right" size={14} /></button>
        <button type="button" className="mr-[14px] flex items-center gap-[2px] whitespace-nowrap">
          <Icon name="clock" size={17} />
          Aug 18, 2016 01:49:33 to Aug 18, 2016 02:51:10
        </button>
        <button type="button" className="mr-[24px] whitespace-nowrap text-[#a37b37]">Refresh every 1m</button>
        <button type="button" aria-label="Refresh"><Icon name="refresh" size={17} /></button>
      </div>
    </header>
  );
}

function CollapsedRow({ title }: { title: string }) {
  return (
    <div className="flex h-[31px] items-stretch bg-[#1f1d1d]">
      <button type="button" aria-label={`Expand ${title}`} className="flex w-6 items-center justify-center bg-[#005f81]">
        <svg width="5" height="8" viewBox="0 0 5 8" aria-hidden="true"><path d="M5 0v8L0 4z" fill="#d8d9da" /></svg>
      </button>
      <h2 className="flex-1 pr-6 text-center text-[13px] leading-[31px] font-bold">{title}</h2>
    </div>
  );
}

export default function App() {
  return (
    <div className="h-screen overflow-hidden bg-[#141414] font-['DejaVu_Sans',sans-serif] text-[#d8d9da]">
      <NavBar />
      <main className="flex flex-col gap-[11px] pt-[13px]">
        {ROWS.map((row) => (
          <div key={row[0].title} className="flex items-start">
            <button type="button" aria-label="Row options" className="mt-[5px] mr-[5px] h-[30px] w-[6px] shrink-0 bg-[#69a300]" />
            <div className="flex min-w-0 flex-1 gap-3 pr-[11px]">
              {row.map((p) => <Panel key={p.title} {...p} />)}
            </div>
          </div>
        ))}
      </main>
      <footer className="mt-3 px-[6px]">
        <CollapsedRow title="REBALANCE RELATED" />
        <CollapsedRow title="REBALANCE RELATED 2" />
        <div className="flex justify-end pr-[10px]">
          <button type="button" className="flex h-6 w-[90px] items-center justify-center gap-[3px] rounded-[2px] bg-[#006187] text-[12px] text-white">
            <Icon name="plus" size={12} />
            ADD ROW
          </button>
        </div>
      </footer>
    </div>
  );
}
